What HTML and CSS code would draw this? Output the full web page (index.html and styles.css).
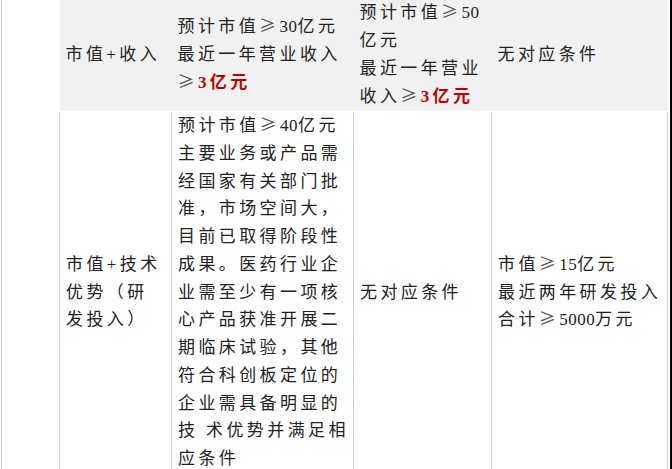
FILE: index.html
```html
<!DOCTYPE html>
<html lang="zh-CN">
<head>
<meta charset="utf-8">
<title>科创板上市标准</title>
<link rel="stylesheet" href="styles.css">
</head>
<body>
<div class="page">
  <div class="gutter"></div>
  <table class="grid">
    <colgroup><col class="c1"><col class="c2"><col class="c3"><col class="c4"></colgroup>
    <tr class="head">
      <td>市值+收入</td>
      <td>预计市值<span class="ge">≥</span><span class="n">30</span>亿元<br>最近一年营业收入<br><span class="ge">≥</span><b class="red">3亿元</b></td>
      <td>预计市值<span class="ge">≥</span><span class="n">50</span><br>亿元<br>最近一年营业<br>收入<span class="ge">≥</span><b class="red">3亿元</b></td>
      <td>无对应条件</td>
    </tr>
    <tr class="body">
      <td>市值+技术<br>优势（研<br>发投入）</td>
      <td>预计市值<span class="ge">≥</span><span class="n">40</span>亿元<br>主要业务或产品需<br>经国家有关部门批<br>准，市场空间大，<br>目前已取得阶段性<br>成果。医药行业企<br>业需至少有一项核<br>心产品获准开展二<br>期临床试验，其他<br>符合科创板定位的<br>企业需具备明显的<br>技 术优势并满足相<br>应条件</td>
      <td>无对应条件</td>
      <td>市值<span class="ge">≥</span><span class="n">15</span>亿元<br>最近两年研发投入<br>合计<span class="ge">≥</span><span class="n">5000</span>万元</td>
    </tr>
  </table>
  <div class="rgap"></div>
  <div class="edge"></div>
</div>
</body>
</html>
```

FILE: styles.css
```css
html, body {
  margin: 0;
  padding: 0;
  background: #fff;
}
body {
  font-family: "Liberation Serif", "Noto Sans CJK SC", serif;
  font-size: 17px;
  color: #222;
  letter-spacing: 3.4px;
}
.page {
  display: flex;
  height: 469px;
  overflow: hidden;
}
.gutter {
  flex: 0 0 57px;
  margin-left: 1px;
  border-left: 1px solid #cfcfcf;
}
.grid {
  flex: 0 0 608px;
  width: 608px;
  border-collapse: collapse;
  table-layout: fixed;
  margin-top: -1px;
  align-self: flex-start;
}
.c1 { width: 112px; }
.c2 { width: 182px; }
.c3 { width: 138px; }
.c4 { width: 176px; }
.grid td {
  padding: 0 6px;
  vertical-align: middle;
  white-space: nowrap;
}
.head td {
  background: #f1f1f1;
  line-height: 28px;
  height: 110px;
  border-bottom: 1px solid #fff;
}
.body td {
  line-height: 27.75px;
  border-left: 1px solid #d2d2d2;
  border-right: 1px solid #d2d2d2;
}
.ge, .n, .red {
  line-height: 0;
}
.ge {
  font-family: "Noto Sans CJK SC", sans-serif;
  color: #555;
}
.n {
  letter-spacing: 0.5px;
}
.red {
  color: #c00000;
  font-weight: bold;
}
.rgap { flex: 0 0 2px; }
.edge {
  flex: 0 0 3px;
  background: #000;
}
```
